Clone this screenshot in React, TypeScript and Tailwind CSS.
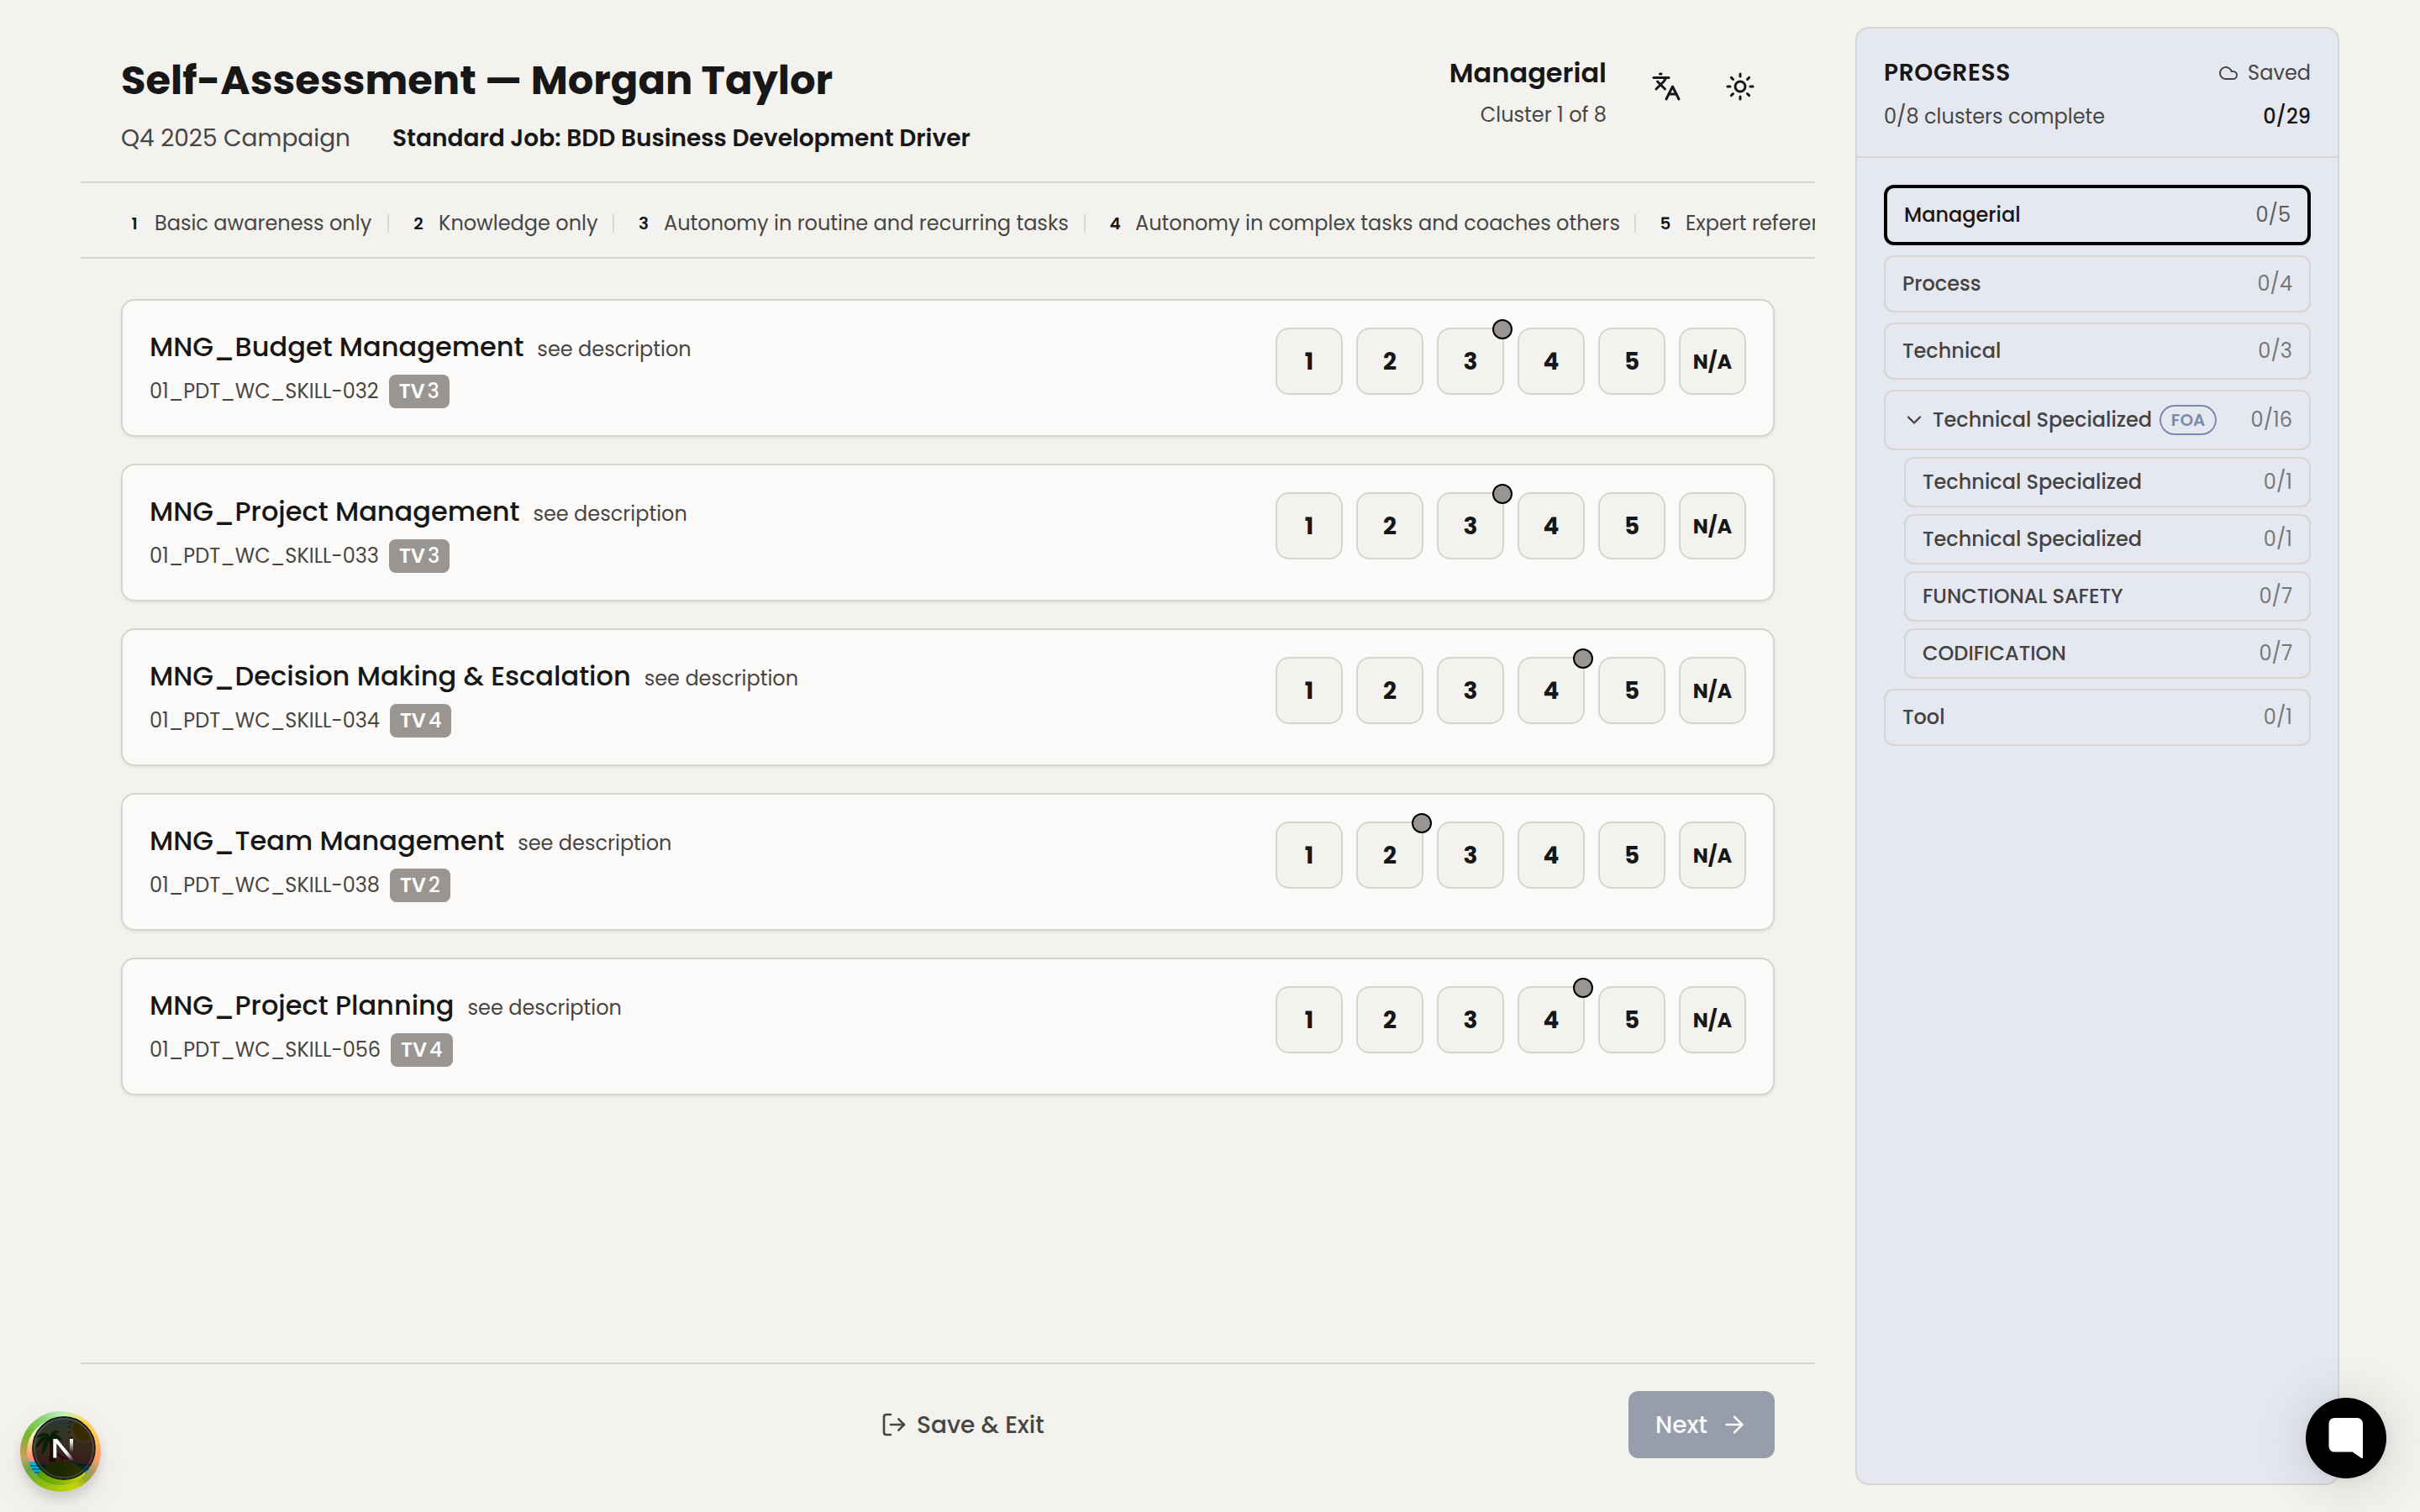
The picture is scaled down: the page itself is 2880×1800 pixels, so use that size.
import { ArrowRight, ChevronDown, Cloud, Languages, LogOut, Sun } from "lucide-react";

const legend = [
  { n: 1, label: "Basic awareness only", box: "w-[338px]" },
  { n: 2, label: "Knowledge only", box: "w-[268px]" },
  { n: 3, label: "Autonomy in routine and recurring tasks", box: "w-[561px]" },
  { n: 4, label: "Autonomy in complex tasks and coaches others", box: "w-[655px]" },
  { n: 5, label: "Expert reference", box: "w-[338px]" },
];

const skills = [
  { name: "MNG_Budget Management", code: "01_PDT_WC_SKILL-032", target: 3 },
  { name: "MNG_Project Management", code: "01_PDT_WC_SKILL-033", target: 3 },
  { name: "MNG_Decision Making & Escalation", code: "01_PDT_WC_SKILL-034", target: 4 },
  { name: "MNG_Team Management", code: "01_PDT_WC_SKILL-038", target: 2 },
  { name: "MNG_Project Planning", code: "01_PDT_WC_SKILL-056", target: 4 },
];

const subClusters = [
  { name: "Technical Specialized", count: "0/1" },
  { name: "Technical Specialized", count: "0/1" },
  { name: "FUNCTIONAL SAFETY", count: "0/7" },
  { name: "CODIFICATION", count: "0/7" },
];

const Header = () => {
  return (
    <header className="flex h-[218px] shrink-0 justify-between border-b-2 border-[#d5d4cf] px-12 pt-16">
      <div>
        <h1 className="text-[48px] font-bold leading-[64px] whitespace-nowrap">
          Self-Assessment — Morgan Taylor
        </h1>
        <div className="mt-[13px] flex items-center text-[28px] leading-[48px] whitespace-nowrap">
          <span className="w-[323px] text-[#474644]">Q4 2025 Campaign</span>
          <span className="font-semibold">Standard Job: BDD Business Development Driver</span>
        </div>
      </div>
      <div className="flex">
        <div className="mr-8 text-right">
          <div className="text-[32px] font-semibold leading-[46px]">Managerial</div>
          <div className="mt-[9px] text-2xl leading-[36px] text-[#474644]">Cluster 1 of 8</div>
        </div>
        <button className="flex h-[78px] w-[78px] items-center justify-center">
          <Languages size={36} />
        </button>
        <button className="mr-[2px] ml-[10px] flex h-[78px] w-[78px] items-center justify-center">
          <Sun size={36} />
        </button>
      </div>
    </header>
  );
};

const Legend = () => {
  return (
    <div className="flex h-[90px] shrink-0 items-center overflow-hidden border-b-2 border-[#d5d4cf] pt-2 pl-12 text-2xl whitespace-nowrap">
      {legend.map((item) => (
        <div key={item.n} className={`flex shrink-0 items-center ${item.box}`}>
          <span className="flex h-8 w-8 items-center justify-center rounded-lg bg-[#f5f3f1] text-[20px] font-semibold">
            {item.n}
          </span>
          <span className="ml-2 text-[#474644]">{item.label}</span>
          <span className="mr-[19px] ml-auto h-[22px] w-[2px] bg-[#d9d8d4]" />
        </div>
      ))}
    </div>
  );
};

const RatingButton = ({ label, marked }: { label: string; marked?: boolean }) => {
  return (
    <button
      className={`relative h-20 w-20 rounded-2xl border-2 border-[#d6d4ce] bg-[#f4f2ee] pt-0.5 font-bold ${
        label === "N/A" ? "text-2xl" : "text-[28px]"
      }`}
    >
      {label}
      {marked && (
        <span className="absolute -top-3 -right-3 h-6 w-6 rounded-full border-2 border-black bg-[#999592]" />
      )}
    </button>
  );
};

const SkillCard = ({ name, code, target }: { name: string; code: string; target: number }) => {
  return (
    <article className="flex h-[164px] justify-between rounded-2xl border-2 border-[#d6d4ce] bg-[#fbfaf8] px-8 pt-8 shadow-[0_2px_4px_rgba(0,0,0,0.06)]">
      <div className="whitespace-nowrap">
        <div className="-mt-px flex items-baseline gap-4 leading-[48px]">
          <h2 className="text-[32px] font-medium">{name}</h2>
          <span className="text-2xl text-[#474644]">see description</span>
        </div>
        <div className="mt-[9px] flex items-center gap-3 text-2xl">
          <span className="text-[#474644]">{code}</span>
          <span className="flex h-10 items-center rounded-lg bg-[#999592] px-3 font-medium text-white">
            <b className="mr-[3px] font-semibold">TV</b>
            {target}
          </span>
        </div>
      </div>
      <div className="flex gap-4">
        {[1, 2, 3, 4, 5].map((n) => (
          <RatingButton key={n} label={String(n)} marked={n === target} />
        ))}
        <RatingButton label="N/A" />
      </div>
    </article>
  );
};

const Footer = () => {
  return (
    <footer className="flex h-[178px] shrink-0 items-start border-t-2 border-[#d5d4cf] pt-8 pr-12 text-[28px] font-medium">
      <button className="ml-[952px] flex h-20 items-center gap-[11px] text-[#474644]">
        <LogOut size={32} />
        <span className="pt-0.5">Save & Exit</span>
      </button>
      <button className="ml-auto flex h-20 w-[174px] items-center justify-center gap-4 rounded-xl bg-[#989dac] text-[#faf9f8]">
        <span className="pt-0.5">Next</span>
        <ArrowRight size={32} />
      </button>
    </footer>
  );
};

const ClusterItem = ({ name, count }: { name: string; count: string }) => {
  return (
    <div className="flex h-[68px] items-center justify-between rounded-xl border-2 border-[#d8d5d0] px-5">
      <span className="font-medium">{name}</span>
      <span className="text-[#777777]">{count}</span>
    </div>
  );
};

const Sidebar = () => {
  return (
    <aside className="mt-8 ml-12 flex h-[1736px] w-[576px] flex-col rounded-2xl border-2 border-[#d8d5d0] bg-[#e5e8f0] text-2xl whitespace-nowrap">
      <div className="h-[154px] border-b-2 border-[#d8d5d0] px-8 pt-8">
        <div className="flex h-10 items-center justify-between">
          <h2 className="pt-0.5 text-[28px] font-semibold tracking-[0.025em]">PROGRESS</h2>
          <span className="flex items-center gap-[11px] pt-0.5 text-[#474644]">
            <Cloud size={24} />
            Saved
          </span>
        </div>
        <div className="mt-[15px] flex h-9 items-center justify-between">
          <span className="text-[#474644]">0/8 clusters complete</span>
          <span className="font-medium">0/29</span>
        </div>
      </div>
      <nav className="flex flex-col gap-3 px-8 pt-8 text-[#444341]">
        <div className="flex h-[72px] items-center justify-between rounded-xl border-4 border-black px-5">
          <span className="font-medium text-[#171717]">Managerial</span>
          <span className="text-[#5d5d5e]">0/5</span>
        </div>
        <ClusterItem name="Process" count="0/4" />
        <ClusterItem name="Technical" count="0/3" />
        <div>
          <div className="flex h-[72px] items-center rounded-xl border-2 border-[#d8d5d0] px-5">
            <ChevronDown size={28} />
            <span className="ml-2 font-medium">Technical Specialized</span>
            <span className="ml-[9px] flex h-9 w-[68px] items-center justify-center rounded-full border-2 border-[#7b89ab] text-[20px] font-semibold text-[#7b89ab]">
              FOA
            </span>
            <span className="ml-auto text-[#777777]">0/16</span>
          </div>
          <div className="mt-2 ml-6 flex flex-col gap-2">
            {subClusters.map((item, i) => (
              <div
                key={i}
                className="flex h-[60px] items-center justify-between rounded-xl border-2 border-[#d8d5d0] px-5"
              >
                <span className="font-medium">{item.name}</span>
                <span className="text-[#777777]">{item.count}</span>
              </div>
            ))}
          </div>
        </div>
        <ClusterItem name="Tool" count="0/1" />
      </nav>
    </aside>
  );
};

// island badge with the dark Next.js button on top of it
const DevTools = () => {
  return (
    <div className="absolute bottom-6 left-6 h-24 w-24 rounded-full bg-[conic-gradient(#b4f0bb,#d9ec94_20deg,#ffd24e_38deg,#ffc655_65deg,#ff9d6c_100deg,#b09a5c_122deg,#96a92c_138deg,#c5d408_156deg,#b4cd08_180deg,#86b80f_215deg,#6aa548_240deg,#c8a263_262deg,#b2a044_275deg,#76b82a_297deg,#84cf62_325deg,#b4f0bb)] shadow-[0_8px_12px_rgba(0,0,0,0.12),0_16px_44px_rgba(0,0,0,0.06)]">
      <svg viewBox="0 0 96 96" className="h-24 w-24">
        <defs>
          <clipPath id="island">
            <circle cx="48" cy="48" r="40" />
          </clipPath>
          <linearGradient id="sky" x1="0" y1="0" x2="0" y2="1">
            <stop offset="0.05" stopColor="#8ff0e0" />
            <stop offset="0.3" stopColor="#f6f3b0" />
            <stop offset="0.5" stopColor="#ffae78" />
            <stop offset="0.68" stopColor="#ff7478" />
          </linearGradient>
          <linearGradient id="hill" x1="0" y1="0" x2="1" y2="0">
            <stop offset="0" stopColor="#4a9a00" />
            <stop offset="0.5" stopColor="#8fb800" />
            <stop offset="1" stopColor="#d8e800" />
          </linearGradient>
          <linearGradient id="diagonal" x1="42" y1="33" x2="64" y2="59" gradientUnits="userSpaceOnUse">
            <stop offset="0.6" stopColor="#fff" />
            <stop offset="1" stopColor="#fff" stopOpacity="0" />
          </linearGradient>
          <linearGradient id="stem" x1="0" y1="33" x2="0" y2="49" gradientUnits="userSpaceOnUse">
            <stop offset="0.1" stopColor="#fff" />
            <stop offset="1" stopColor="#fff" stopOpacity="0" />
          </linearGradient>
        </defs>
        <g clipPath="url(#island)">
          <rect width="96" height="96" fill="url(#sky)" />
          <circle cx="76" cy="22" r="13" fill="#ffbd00" />
          <circle cx="76" cy="22" r="18" fill="none" stroke="#ff8a00" strokeWidth="4" strokeDasharray="2 4.5" />
          <path d="M0 62q12-4 24 0t24 0 24 0 24-1v30H0z" fill="#00b5cc" />
          <path d="M6 65h26M8 69h22M10 73h18M66 64h22M70 69h18M72 74h12" stroke="#005b7c" strokeWidth="1.6" />
          <path d="M34 60q3-14 0-30l5-1q4 16 3 31z" fill="#6b3612" />
          <g fill="#2c8a1e">
            <path d="M36 29q-8-8-19 3 10-3 19-3z" />
            <path d="M36 29q-15-1-18 16 9-8 18-16z" />
            <path d="M36 29q-12 8-10 23 8-9 10-23z" />
            <path d="M36 29q0-8 11-5-5 5-11 5z" />
            <path d="M36 29q8-5 15 6-8-1-15-6z" />
            <path d="M36 29q10 2 11 14-8-6-11-14z" />
          </g>
          <path d="M44 50q8 9 20 5M50 54v6M61 55v5" stroke="#d11a6a" strokeWidth="2" fill="none" />
          <path d="M16 84Q28 59 50 59t34 25v12H16z" fill="url(#hill)" />
        </g>
        <circle cx="52" cy="44" r="37" fill="#000" fillOpacity="0.78" stroke="#191a18" strokeWidth="1.8" />
        <circle cx="52" cy="44" r="35.2" fill="none" stroke="#fff" strokeOpacity="0.16" strokeWidth="1.8" />
        <path d="M41.3 55.5V33" stroke="#fff" strokeWidth="4" />
        <path d="M42.2 34 62.5 58.6" stroke="url(#diagonal)" strokeWidth="4" />
        <path d="M59 33h4v16h-4z" fill="url(#stem)" />
      </svg>
    </div>
  );
};

const ChatButton = () => {
  return (
    <button className="absolute right-10 bottom-10 h-24 w-24 rounded-full bg-black shadow-[0_2px_12px_rgba(0,0,0,0.06),0_4px_64px_rgba(0,0,0,0.16)]">
      <svg viewBox="0 0 96 96" className="h-24 w-24" fill="#fff">
        <path d="M34 24h27.500a6.500 6.500 0 0 1 6.500 6.500v40.200q0 2-1.800 1L55.500 64.600H34a6.500 6.500 0 0 1-6.500-6.500V30.500A6.500 6.500 0 0 1 34 24z" />
      </svg>
    </button>
  );
};

const App = () => {
  return (
    <main className="relative flex h-[1800px] w-[2880px] overflow-hidden bg-[#f3f2ee] pl-24 font-[Poppins,Inter,sans-serif] text-[#171717]">
      <div className="flex w-[2064px] flex-col">
        <Header />
        <Legend />
        <section className="flex flex-1 flex-col gap-8 px-12 pt-12">
          {skills.map((skill) => (
            <SkillCard key={skill.code} {...skill} />
          ))}
        </section>
        <Footer />
      </div>
      <Sidebar />
      <DevTools />
      <ChatButton />
    </main>
  );
};

export default App;
